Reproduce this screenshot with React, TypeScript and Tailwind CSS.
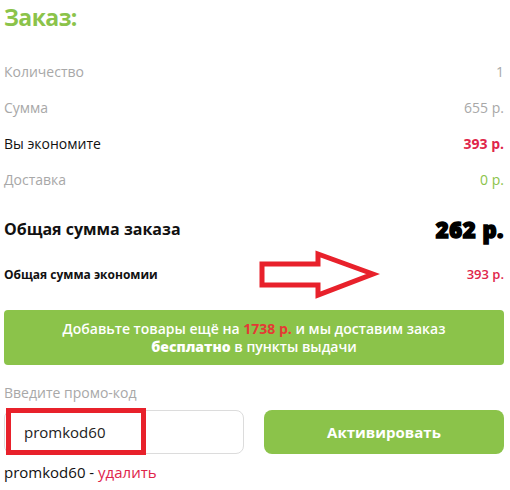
import React from "react";

const rows = [
  { label: "Количество", value: "1", labelCls: "text-[#a8a8a8]", valueCls: "text-[#a8a8a8]" },
  { label: "Сумма", value: "655 р.", labelCls: "text-[#a8a8a8]", valueCls: "text-[#a8a8a8]" },
  { label: "Вы экономите", value: "393 р.", labelCls: "text-[#111]", valueCls: "text-[#e0254a] font-bold" },
  { label: "Доставка", value: "0 р.", labelCls: "text-[#a8a8a8]", valueCls: "text-[#8bc34a]" },
];

function Arrow() {
  return (
    <svg
      className="absolute left-[256px] top-[250px]"
      width="124"
      height="50"
      viewBox="0 0 124 50"
    >
      <path
        d="M6 14 H62 V4 L117 24 L62 45 V35 H6 Z"
        fill="none"
        stroke="#e8212b"
        strokeWidth="5"
      />
    </svg>
  );
}

export default function App() {
  return (
    <div className="relative h-[490px] w-[510px] overflow-hidden bg-white pl-1 font-['Open_Sans',sans-serif]">
      <div className="w-[500px]">
        <h1 className="h-[35px] pt-[1px] text-[23px] font-bold leading-[32px] tracking-tight text-[#8bc34a]">
          Заказ:
        </h1>

        <div className="mt-[18px]">
          {rows.map((r) => (
            <div key={r.label} className="flex h-9 items-center justify-between text-[14px]">
              <span className={r.labelCls}>{r.label}</span>
              <span className={r.valueCls}>{r.value}</span>
            </div>
          ))}
        </div>

        <div className="mt-4 flex h-8 items-center justify-between">
          <span className="text-[16px] font-bold text-[#111]">Общая сумма заказа</span>
          <span className="text-[22px] font-extrabold tracking-wide text-black [-webkit-text-stroke:1.5px_black]">
            262 р.
          </span>
        </div>

        <div className="mt-[14px] flex h-8 items-center justify-between">
          <span className="text-[12px] font-bold text-[#111]">Общая сумма экономии</span>
          <span className="text-[13px] font-semibold text-[#e0254a]">393 р.</span>
        </div>

        <div className="mt-[19px] flex h-[55px] flex-col items-center justify-center rounded bg-[#8bc34a] text-center text-[14px] font-semibold leading-[18px] text-white">
          <p>
            Добавьте товары ещё на <span className="font-bold text-[#e53935]">1738 р.</span> и мы доставим заказ
          </p>
          <p>
            <span className="font-extrabold">бесплатно</span> в пункты выдачи
          </p>
        </div>

        <p className="mt-[18px] text-[14px] leading-5 text-[#a8a8a8]">Введите промо-код</p>

        <div className="mt-[7px] flex justify-between">
          <div className="flex h-11 w-[240px] items-center rounded-lg border border-[#dcdcdc] pl-[19px] text-[15px] text-[#222]">
            promkod60
          </div>
          <button className="h-11 w-[240px] rounded-lg bg-[#8bc34a] text-[15px] font-bold text-white">
            Активировать
          </button>
        </div>

        <p className="mt-[8px] text-[15px] leading-5 text-[#111]">
          promkod60 - <span className="text-[#e0254a]">удалить</span>
        </p>
      </div>

      <Arrow />
      <div className="absolute left-[6px] top-[408px] h-[47px] w-[140px] border-[5px] border-[#e8212b]" />
    </div>
  );
}
